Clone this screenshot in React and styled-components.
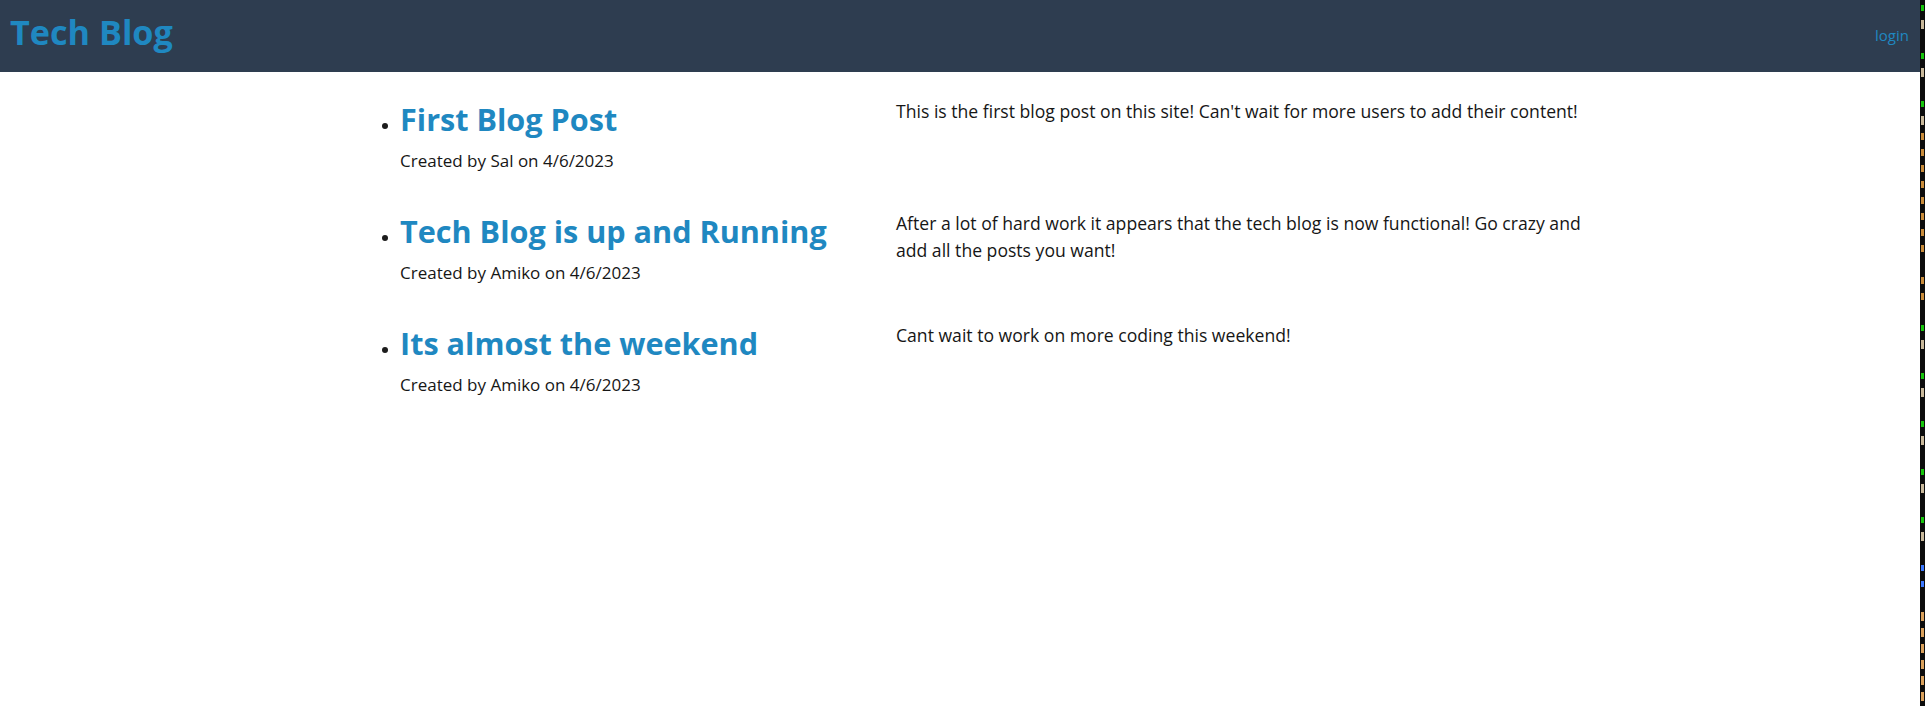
import React from 'react'
import styled, { createGlobalStyle } from 'styled-components'

const GlobalStyle = createGlobalStyle`
  body {
    margin: 0;
    background: #fff;
    font-family: 'Open Sans', 'Noto Sans', sans-serif;
    color: #1c1c1c;
  }
`

const Screen = styled.div`
  display: flex;
  min-height: 706px;
`

const Page = styled.div`
  flex: 1;
  min-width: 0;
`

const Header = styled.header`
  display: flex;
  justify-content: space-between;
  align-items: flex-start;
  box-sizing: border-box;
  height: 72px;
  padding: 11px 11px 0 10px;
  background: #2e3d50;
`

const Brand = styled.h1`
  margin: 0;
  font-size: 34.2px;
  line-height: 41px;
  font-weight: 700;
  color: #1f88c1;
`

const NavLink = styled.a`
  margin-top: 15px;
  font-size: 15px;
  line-height: 18px;
  color: #1f88c1;
  text-decoration: none;
  cursor: pointer;
`

const Main = styled.main`
  padding-left: 360px;
`

const PostList = styled.ul`
  margin: 26px 0 0;
  padding: 0 0 0 40px;
  list-style: none;
`

const Post = styled.li`
  display: grid;
  grid-template-columns: 496px 705px;
  align-items: start;
  margin-bottom: 36px;
`

const PostHead = styled.div`
  padding-top: 3px;
`

const PostTitle = styled.h2`
  display: list-item;
  list-style: disc outside;
  margin: 0;
  font-size: 30.6px;
  line-height: 36.7px;
  font-weight: 700;
  color: #1f88c1;

  &::marker {
    font-size: 16px;
    color: #1c1c1c;
  }
`

const Meta = styled.p`
  margin: 9.4px 0 0;
  font-size: 17px;
  line-height: 27px;
  color: #161616;
`

const Body = styled.p`
  margin: 0;
  font-size: 17.6px;
  line-height: 27px;
  color: #161616;
`

// sliver of a terminal window peeking in at the right edge
const Terminal = styled.div`
  display: flex;
  flex-direction: column;
  width: 5px;
  background: #0c0c0c;
`

const TermLine = styled.div`
  display: flex;
  align-items: center;
  height: 16px;
  padding-left: 1px;

  &::before {
    content: '';
    display: ${(p) => (p.color ? 'block' : 'none')};
    width: 3px;
    height: ${(p) => p.h}px;
    background: ${(p) => p.color};
  }
`

const posts = [
  {
    title: 'First Blog Post',
    author: 'Sal',
    date: '4/6/2023',
    body: "This is the first blog post on this site! Can't wait for more users to add their content!",
  },
  {
    title: 'Tech Blog is up and Running',
    author: 'Amiko',
    date: '4/6/2023',
    body: 'After a lot of hard work it appears that the tech blog is now functional! Go crazy and add all the posts you want!',
  },
  {
    title: 'Its almost the weekend',
    author: 'Amiko',
    date: '4/6/2023',
    body: 'Cant wait to work on more coding this weekend!',
  },
]

const G = ['#16c60c', 6]
const F = ['#c8b89a', 9]
const R = ['#c88b3a', 7]
const A = ['#3b78ff', 6]
const E = ['#d9a05b', 9]
const N = [null, 0]
const termLines = [
  G, F, N, G, F, N, G, F, R, R, R, R, R, R, R, R, N, R, R, N,
  G, F, N, G, F, N, G, F, N, G, F, N, G, F, N, A, A, N, E, E,
  E, E, E, E,
]

export default function App() {
  return (
    <>
      <GlobalStyle />
      <Screen>
        <Page>
          <Header>
            <Brand>Tech Blog</Brand>
            <NavLink>login</NavLink>
          </Header>
          <Main>
            <PostList>
              {posts.map((post) => (
                <Post key={post.title}>
                  <PostHead>
                    <PostTitle>{post.title}</PostTitle>
                    <Meta>
                      Created by {post.author} on {post.date}
                    </Meta>
                  </PostHead>
                  <Body>{post.body}</Body>
                </Post>
              ))}
            </PostList>
          </Main>
        </Page>
        <Terminal>
          {termLines.map(([color, h], i) => (
            <TermLine key={i} color={color} h={h} />
          ))}
        </Terminal>
      </Screen>
    </>
  )
}
